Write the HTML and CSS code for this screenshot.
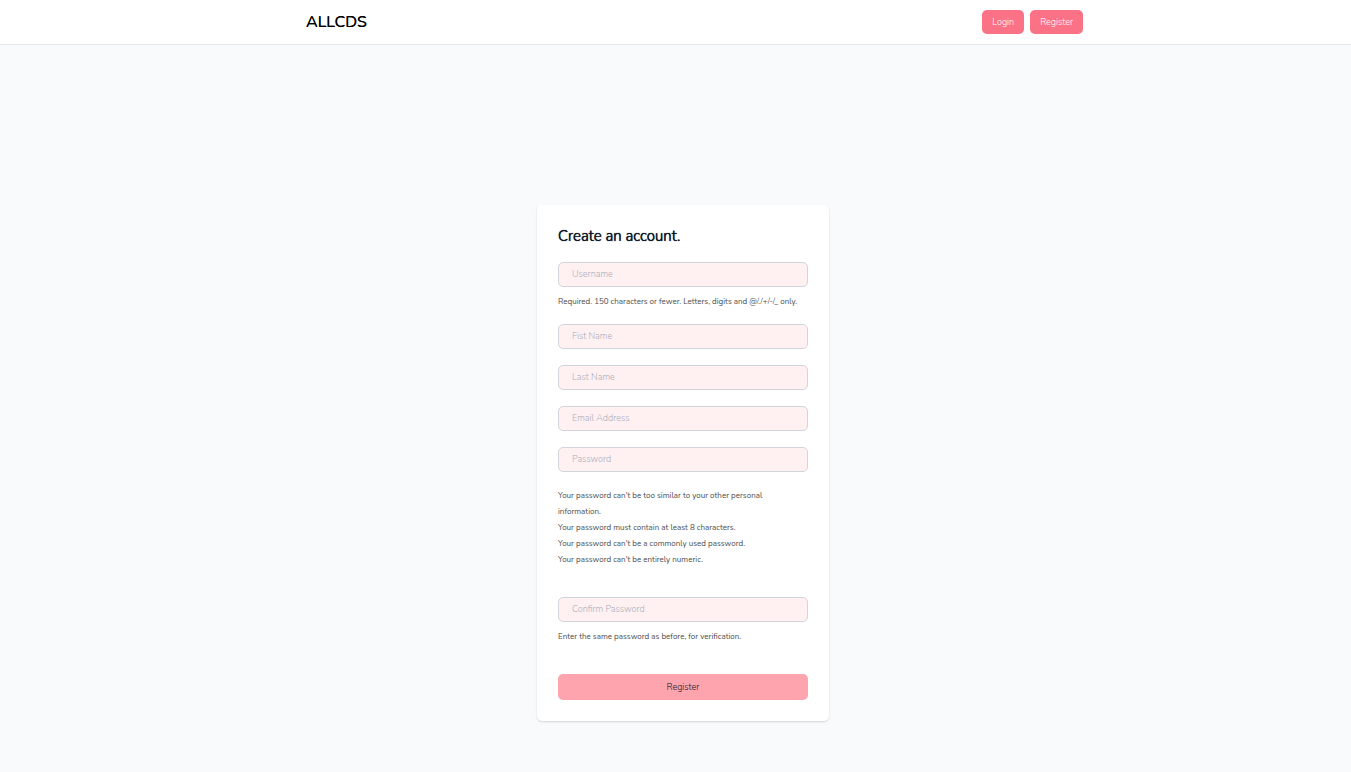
FILE: index.html
```html
<!DOCTYPE html>
<html lang="en">
<head>
<meta charset="utf-8">
<meta name="viewport" content="width=device-width, initial-scale=1">
<title>ALLCDS</title>
<link rel="stylesheet" href="styles.css">
</head>
<body>
<header class="topbar">
  <nav class="nav">
    <a class="brand" href="#">ALLCDS</a>
    <div class="actions">
      <a class="pill" href="#">Login</a>
      <a class="pill" href="#">Register</a>
    </div>
  </nav>
</header>
<main class="page">
  <form class="card">
    <h1 class="title">Create an account.</h1>
    <input class="field" type="text" placeholder="Username" aria-label="Username">
    <p class="help">Required. 150 characters or fewer. Letters, digits and @/./+/-/_ only.</p>
    <input class="field" type="text" placeholder="Fist Name" aria-label="First name">
    <input class="field" type="text" placeholder="Last Name" aria-label="Last name">
    <input class="field" type="email" placeholder="Email Address" aria-label="Email address">
    <input class="field" type="password" placeholder="Password" aria-label="Password">
    <ul class="rules">
      <li>Your password can't be too similar to your other personal information.</li>
      <li>Your password must contain at least 8 characters.</li>
      <li>Your password can't be a commonly used password.</li>
      <li>Your password can't be entirely numeric.</li>
    </ul>
    <input class="field" type="password" placeholder="Confirm Password" aria-label="Confirm password">
    <p class="help verify">Enter the same password as before, for verification.</p>
    <button class="submit" type="submit">Register</button>
  </form>
</main>
</body>
</html>
```
FILE: styles.css
```css
* { box-sizing: border-box; }
body {
  margin: 0;
  min-height: 100vh;
  display: flex;
  flex-direction: column;
  background: #f9fafb;
  color: #111827;
  font-family: Nunito, "Open Sans", sans-serif;
  font-weight: 300;
}
.topbar {
  background: #fff;
  border-bottom: 1px solid #e5e7eb;
  padding: 10px 0 10px 38px;
}
.nav {
  display: flex;
  align-items: center;
  justify-content: space-between;
  max-width: 777px;
  margin: 0 auto;
}
.brand {
  color: #000;
  font-size: 16px;
  font-weight: 400;
  text-decoration: none;
  text-shadow: 0 0 0 #000;
}
.actions { display: flex; gap: 6px; }
.pill {
  background: #fb7185;
  color: #fff;
  border-radius: 5px;
  padding: 0 10px;
  font-size: 9px;
  line-height: 24px;
  text-decoration: none;
}
.page {
  flex: 1;
  display: flex;
  justify-content: center;
  padding: 160px 0 51px 15px;
}
.card {
  width: 100%;
  max-width: 292px;
  display: flex;
  flex-direction: column;
  align-self: flex-start;
  padding: 21px;
  background: #fff;
  border-radius: 5px;
  box-shadow: 0 1px 2px rgba(0, 0, 0, .15);
}
.title {
  margin: 0 0 16px;
  font-size: 15px;
  line-height: 20px;
  font-weight: 300;
  text-shadow: 0 0 0 #111827, 0 0 1px #111827;
}
.field {
  width: 100%;
  height: 25px;
  margin: 0 0 16px;
  padding: 0 13px 2px;
  border: 1px solid #d1d5db;
  border-radius: 5px;
  background: #fff1f2;
  color: #111827;
  font: inherit;
  font-size: 9px;
}
.field::placeholder { color: #a9adb8; }
.help, .rules {
  font-size: 8px;
  line-height: 16px;
  font-weight: 400;
  color: #4b4b4b;
}
.help { margin: -10px 0 15px; }
.title + .field { margin-bottom: 17px; }
.title + .field + .help { margin-bottom: 14px; }
.rules {
  list-style: none;
  margin: 0 0 29px;
  padding: 0 20px 0 0;
}
.verify { margin: -9px 0 29px; }
.submit {
  height: 26px;
  border: 0;
  border-radius: 5px;
  background: #fda4af;
  color: #111827;
  font: inherit;
  font-size: 9px;
}
```
